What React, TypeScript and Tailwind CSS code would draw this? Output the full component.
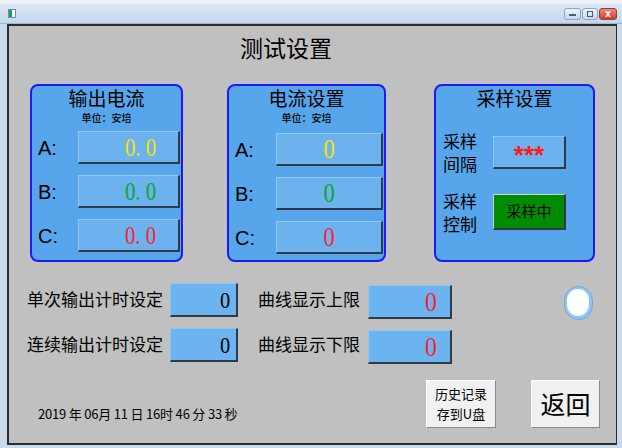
import React from "react";

type Row = { label: string; value: string; color: string };

const cjk = "font-['Noto_Sans_CJK_SC',sans-serif]";
const serif = "font-['Liberation_Serif',serif]";

const currentRows: Row[] = [
  { label: "A:", value: "0. 0", color: "text-[#f5e400]" },
  { label: "B:", value: "0. 0", color: "text-[#0ea62a]" },
  { label: "C:", value: "0. 0", color: "text-[#ff1f2f]" },
];

const setRows: Row[] = [
  { label: "A:", value: "0", color: "text-[#f5e400]" },
  { label: "B:", value: "0", color: "text-[#0ea62a]" },
  { label: "C:", value: "0", color: "text-[#ff1f2f]" },
];

const boxCls =
  "bg-[#6cb2ee] border-t border-l border-t-[#8fc6f4] border-l-[#8fc6f4] border-b-2 border-r-2 border-b-[#2e3a46] border-r-[#2e3a46]";

const TitleBar = () => (
  <div className="h-[20px] flex items-center bg-gradient-to-b from-[#dde8f5] to-[#c3d6eb] border-b border-[#9fb6cf]">
    <div className="ml-[8px] w-[8px] h-[9px] bg-white border border-[#6b8fb5] flex">
      <div className="w-[3px] h-full bg-[#2a9a5a]" />
    </div>
    <div className="flex-1" />
    <div className="w-[17px] h-[12px] rounded-[3px] border border-[#8aa3bf] bg-gradient-to-b from-[#eef3f9] to-[#c9d8e9] flex items-center justify-center">
      <div className="w-[7px] h-[2px] bg-[#4b5d72] mt-[3px]" />
    </div>
    <div className="ml-[1px] w-[16px] h-[12px] rounded-[3px] border border-[#8aa3bf] bg-gradient-to-b from-[#eef3f9] to-[#c9d8e9] flex items-center justify-center">
      <div className="w-[6px] h-[6px] border border-[#4b5d72]" />
    </div>
    <div className="ml-[1px] mr-[5px] w-[18px] h-[12px] rounded-[3px] border border-[#9b3a2e] bg-gradient-to-b from-[#e88a77] to-[#c6402c] flex items-center justify-center text-white text-[10px] leading-none font-bold font-['Liberation_Sans',sans-serif]">
      x
    </div>
  </div>
);

const PanelTitle = ({ title, unit }: { title: string; unit?: string }) => (
  <>
    <div className="text-center text-[19px] leading-[22px] pt-[1px]">{title}</div>
    {unit && <div className="text-center text-[10px] leading-[12px] mt-[3px] font-medium">{unit}</div>}
  </>
);

const ValuePanel = ({
  title,
  rows,
  width,
  boxW,
  labelW,
  first,
  align,
  big,
}: {
  title: string;
  rows: Row[];
  width: string;
  boxW: string;
  labelW: string;
  first: string;
  align: string;
  big: string;
}) => (
  <div className={`${width} h-[178px] rounded-[8px] border-2 border-[#1b1bf5] bg-[#57a5ea] flex flex-col`}>
    <PanelTitle title={title} unit="单位：安培" />
    <div className={`flex flex-col gap-[11px] ${first}`}>
      {rows.map((r) => (
        <div key={r.label} className="flex items-center h-[33px]">
          <div className={`${labelW} pl-[6px] text-[20px] font-['Liberation_Sans',sans-serif]`}>{r.label}</div>
          <div className={`${boxW} h-[33px] ${boxCls} flex items-center ${align} ${serif} ${big} ${r.color}`}>
            <span className="inline-block scale-x-[0.8]">{r.value}</span>
          </div>
        </div>
      ))}
    </div>
  </div>
);

const SamplePanel = () => (
  <div className="w-[161px] h-[178px] rounded-[8px] border-2 border-[#1b1bf5] bg-[#57a5ea] flex flex-col">
    <PanelTitle title="采样设置" />
    <div className="flex items-center mt-[20px]">
      <div className="w-[57px] pl-[7px] text-[17px] leading-[23px]">
        采样
        <br />
        间隔
      </div>
      <div className={`w-[73px] h-[33px] ${boxCls} flex items-center justify-center text-[#ff1a1a] text-[26px] font-bold font-['Liberation_Sans',sans-serif] pt-[8px]`}>
        ***
      </div>
    </div>
    <div className="flex items-center mt-[14px]">
      <div className="w-[57px] pl-[7px] text-[17px] leading-[23px]">
        采样
        <br />
        控制
      </div>
      <div className="w-[73px] h-[36px] bg-[#008c00] border-t border-l border-t-[#d0d0d0] border-l-[#d0d0d0] border-b-2 border-r-2 border-b-[#2e3a46] border-r-[#2e3a46] flex items-center justify-center text-[15px]">
        采样中
      </div>
    </div>
  </div>
);

const NumBox = ({ w, color, mt }: { w: string; color: string; mt?: string }) => (
  <div className={`${w} h-[34px] ${mt ?? ""} ${boxCls} bg-[#6cb4ef] flex items-center justify-end ${serif} ${color}`}>
    <span className="inline-block scale-x-[0.85]">0</span>
  </div>
);

const Lamp = () => (
  <div className="ml-[112px] mt-[3px] w-[29px] h-[34px] rounded-full border border-[#6ea9e2] bg-[#8ec5f3] flex pt-[2px] pl-[2px]">
    <div className="w-[22px] h-[27px] rounded-full bg-[radial-gradient(ellipse_at_45%_40%,#ffffff_0%,#ffffff_60%,#ececec_85%,#dedede_100%)]" />
  </div>
);

const SettingRow = ({ left, right, top, circle }: { left: string; right: string; top: string; circle?: boolean }) => (
  <div className={`flex items-start pl-[18px] h-[34px] ${top}`}>
    <div className="w-[143px] text-[17px] leading-[32px]">{left}</div>
    <NumBox w="w-[68px]" color="text-black text-[24px] pr-[5px]" />
    <div className="ml-[20px] w-[110px] text-[17px] leading-[32px]">{right}</div>
    <NumBox w="w-[84px]" color="text-[#ff1f2f] text-[28px] pr-[12px]" mt="mt-[2px]" />
    {circle && <Lamp />}
  </div>
);

export default function App() {
  return (
    <div className={`w-[622px] h-[448px] bg-[#cbdaea] flex flex-col overflow-hidden text-black ${cjk}`}>
      <div className="h-[4px] bg-[#eef2f6]" />
      <TitleBar />
      <div className="ml-[7px] mr-[5px] mb-[3px] flex-1 border-2 border-r border-[#2b2b2b] bg-[#c0c0c0] flex flex-col">
        <div className="h-[58px] pt-[6px] pl-[231px] text-[23px] leading-[30px]">测试设置</div>

        <div className="h-[183px] flex items-start pl-[21px]">
          <ValuePanel
            title="输出电流"
            rows={currentRows}
            width="w-[153px]"
            boxW="w-[102px]"
            labelW="w-[46px]"
            first="mt-[7px]"
            align="justify-end pr-[18px]"
            big="text-[26px]"
          />
          <div className="ml-[44px]">
            <ValuePanel
              title="电流设置"
              rows={setRows}
              width="w-[159px]"
              boxW="w-[107px]"
              labelW="w-[47px]"
              first="mt-[9px]"
              align="justify-center"
              big="text-[28px]"
            />
          </div>
          <div className="ml-[48px]">
            <SamplePanel />
          </div>
        </div>

        <SettingRow left="单次输出计时设定" right="曲线显示上限" top="mt-[16px]" circle />
        <SettingRow left="连续输出计时设定" right="曲线显示下限" top="mt-[11px]" />

        <div className="flex items-start mt-[18px] h-[48px]">
          <div className="w-[417px] pl-[29px] mt-[26px] text-[13px] leading-[16px] tracking-[-0.2px]">
            2019 年 06月 11 日 16时 46 分 33 秒
          </div>
          <div className="w-[70px] h-[48px] bg-[#f1f1f1] border border-t-white border-l-white border-b-[#8a8a8a] border-r-[#8a8a8a] flex flex-col items-center justify-center text-[13px] leading-[20px]">
            <div>历史记录</div>
            <div>存到U盘</div>
          </div>
          <div className="ml-[35px] w-[69px] h-[48px] bg-[#f1f1f1] border border-t-white border-l-white border-b-[#8a8a8a] border-r-[#8a8a8a] flex items-center justify-center text-[25px]">
            返回
          </div>
        </div>
      </div>
    </div>
  );
}
